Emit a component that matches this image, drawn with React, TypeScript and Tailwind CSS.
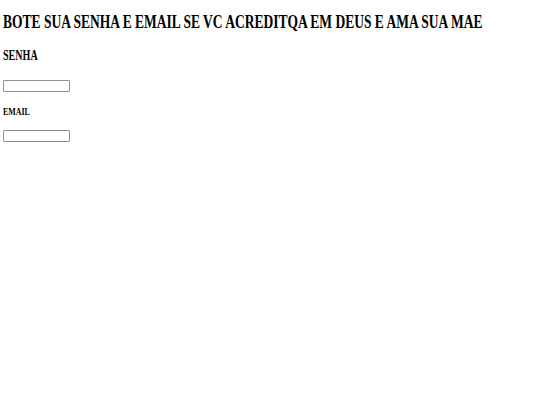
export default function App() {
  return (
    <div className="min-h-screen overflow-hidden bg-white px-[3px] font-['Liberation_Serif',serif] text-black">
      <h1 className="overflow-hidden pt-[12px] text-[18px] font-bold leading-[20px] whitespace-nowrap">
        <span className="inline-block origin-left scale-x-[0.75]">
          BOTE SUA SENHA E EMAIL SE VC ACREDITQA EM DEUS E AMA SUA MAE
        </span>
      </h1>
      <h2 className="mt-[16px] text-[14px] font-bold leading-[16px]">
        <span className="inline-block origin-left scale-x-[0.72]">SENHA</span>
      </h2>
      <input
        type="password"
        className="mt-[16px] block h-[12px] w-[67px] rounded-[1px] border border-[#909090] bg-white"
      />
      <h3 className="mt-[13px] text-[11px] font-bold leading-[12px]">
        <span className="inline-block origin-left scale-x-[0.72]">EMAIL</span>
      </h3>
      <input
        type="email"
        className="mt-[13px] block h-[12px] w-[67px] rounded-[1px] border border-[#909090] bg-white"
      />
    </div>
  );
}
